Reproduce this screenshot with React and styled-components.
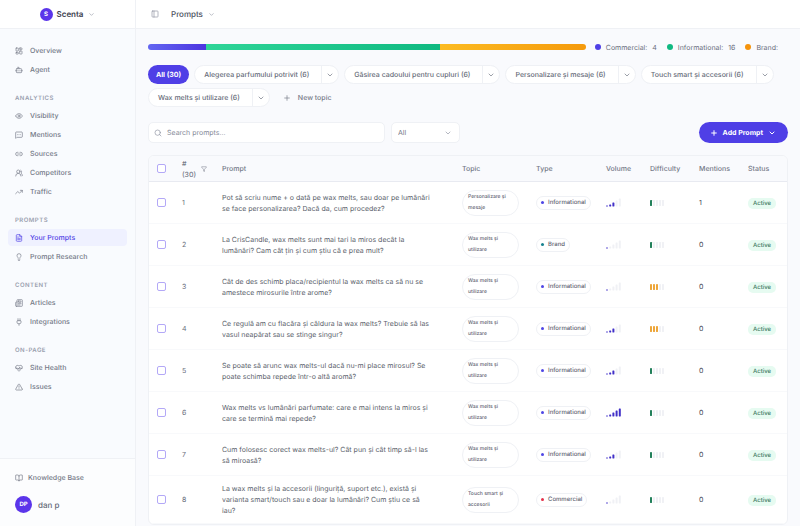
import React from "react";
import styled, { createGlobalStyle, css } from "styled-components";
import {
  LayoutDashboard,
  Bot,
  Eye,
  MessageSquareMore,
  Link2,
  UsersRound,
  TrendingUp,
  FileText,
  Lightbulb,
  Newspaper,
  Plug,
  HeartPulse,
  TriangleAlert,
  BookOpen,
  ChevronDown,
  PanelLeft,
  Plus,
  Search,
  Filter,
} from "lucide-react";

const Global = createGlobalStyle`
  *, *::before, *::after { box-sizing: border-box; }
  body {
    margin: 0;
    background: #f9fafd;
    color: #5b6070;
    font-family: Inter, "Liberation Sans", sans-serif;
    font-size: 7px;
    text-rendering: geometricPrecision;
  }
  button, input, select { font: inherit; color: inherit; text-rendering: inherit; }
  button { cursor: pointer; border: 0; background: none; padding: 0; }
  svg { flex: none; display: block; }
`;

const line = "#eff1f5";
const indigo = "#4f3fe6";

const Shell = styled.div`
  display: flex;
  height: 100vh;
  overflow: hidden;
`;

const Sidebar = styled.aside`
  display: flex;
  flex-direction: column;
  flex: none;
  width: 136px;
  border-right: 1px solid ${line};
  background: #f9fbfe;
`;

const Brand = styled.button`
  display: flex;
  align-items: center;
  justify-content: center;
  gap: 4px;
  height: 29px;
  flex: none;
  background: #fff;
  border-bottom: 1px solid ${line};
  font-size: 8px;
  font-weight: 600;
  color: #3d4150;
  svg { color: #8e93a1; margin-left: 1px; }
`;

const Avatar = styled.span`
  display: grid;
  place-items: center;
  width: ${(p) => p.$size}px;
  height: ${(p) => p.$size}px;
  border-radius: 50%;
  background: #5b35ea;
  color: #fff;
  font-size: 6px;
  font-weight: 700;
`;

const Nav = styled.nav`
  flex: 1;
  min-height: 0;
  padding: 13px 8px 0;
`;

const Section = styled.section`
  display: flex;
  flex-direction: column;
  gap: 2px;
  & + & { margin-top: 15px; }
`;

const SectionTitle = styled.h2`
  margin: 0;
  padding: 0 7px;
  font-size: 6px;
  line-height: 12px;
  font-weight: 600;
  letter-spacing: 0.08em;
  text-transform: uppercase;
  color: #9aa0ae;
`;

const NavItem = styled.a`
  display: flex;
  align-items: center;
  gap: ${(p) => (p.$tight ? 5 : 7)}px;
  height: 17px;
  padding: 0 7px;
  border-radius: 4px;
  font-size: 7px;
  font-weight: 500;
  color: #747987;
  text-decoration: none;
  ${(p) =>
    p.$active &&
    css`
      background: #eff1ff;
      color: ${indigo};
    `}
`;

const SidebarFooter = styled.footer`
  display: flex;
  flex-direction: column;
  gap: 10px;
  padding: 10px 8px 13px;
  border-top: 1px solid ${line};
  background: #fcfdfe;
`;

const User = styled.button`
  display: flex;
  align-items: center;
  gap: 6px;
  padding: 0 7px;
  font-size: 8px;
  font-weight: 500;
  color: #646977;
`;

const Main = styled.main`
  flex: 1;
  min-width: 0;
  display: flex;
  flex-direction: column;
`;

const Topbar = styled.header`
  display: flex;
  align-items: center;
  gap: 12px;
  height: 29px;
  flex: none;
  padding: 0 15px;
  background: #fff;
  border-bottom: 1px solid ${line};
  color: #7d8290;
`;

const TopbarButton = styled.button`
  display: flex;
  align-items: center;
  gap: 5px;
  font-size: 8px;
  font-weight: 500;
  color: #4d5160;
  svg { color: #8e93a1; }
`;

const Content = styled.div`
  flex: 1;
  min-height: 0;
  overflow: auto;
  scrollbar-width: none;
  padding: 13px 12px;
`;

const Distribution = styled.div`
  display: flex;
  align-items: center;
  gap: 9px;
  height: 10px;
`;

const Bar = styled.div`
  display: flex;
  flex: 1;
  height: 6px;
  border-radius: 3px;
  overflow: hidden;
`;

const Segment = styled.div`
  flex: ${(p) => p.$share};
  background: linear-gradient(90deg, ${(p) => p.$from}, ${(p) => p.$to});
`;

const Legend = styled.ul`
  display: flex;
  gap: 10px;
  margin: 0;
  padding: 0 10px 0 0;
  list-style: none;
  font-size: 7px;
  color: #6a6f7d;
`;

const LegendItem = styled.li`
  display: flex;
  align-items: center;
  gap: 5px;
  &::before {
    content: "";
    width: 6px;
    height: 6px;
    border-radius: 50%;
    background: ${(p) => p.$color};
  }
`;

const Chips = styled.div`
  display: flex;
  flex-wrap: wrap;
  gap: 4px 5px;
  margin-top: 13px;
`;

const chipText = css`
  font-size: 7px;
  font-weight: 500;
  line-height: 17px;
`;

const AllChip = styled.button`
  ${chipText}
  height: 19px;
  padding: 0 8px;
  border-radius: 10px;
  background: ${indigo};
  color: #fff;
  font-weight: 700;
`;

const Chip = styled.div`
  display: flex;
  height: 19px;
  border: 1px solid ${line};
  border-radius: 10px;
  background: #fff;
`;

const ChipLabel = styled.button`
  ${chipText}
  padding: 0 12px 0 9px;
  color: #666b78;
`;

const ChipMenu = styled.button`
  display: grid;
  place-items: center;
  width: 17px;
  border-left: 1px solid ${line};
  color: #6a6f7d;
`;

const NewTopic = styled.button`
  ${chipText}
  display: flex;
  align-items: center;
  gap: 7px;
  height: 19px;
  padding: 0 8px;
  color: #747987;
`;

const Toolbar = styled.div`
  display: flex;
  align-items: center;
  gap: 6px;
  margin-top: 15px;
`;

const SearchField = styled.label`
  display: flex;
  align-items: center;
  gap: 5px;
  flex: 0 1 237px;
  height: 21px;
  padding: 0 5px;
  border: 1px solid ${line};
  border-radius: 5px;
  background: #fff;
  color: #8e93a1;
`;

const SearchInput = styled.input`
  flex: 1;
  min-width: 0;
  border: 0;
  padding: 0;
  outline: 0;
  background: none;
  font-size: 7px;
  &::placeholder { color: #858a98; opacity: 1; }
`;

const SelectField = styled.div`
  display: grid;
  align-items: center;
  width: 69px;
  height: 21px;
  border: 1px solid ${line};
  border-radius: 5px;
  background: #fff;
  color: #8e93a1;
  & > * { grid-area: 1 / 1; }
  svg { justify-self: end; margin-right: 7px; pointer-events: none; }
`;

const Select = styled.select`
  appearance: none;
  width: 100%;
  height: 100%;
  padding: 0 6px;
  border: 0;
  background: none;
  color: #747987;
`;

const AddButton = styled.button`
  display: flex;
  align-items: center;
  gap: 5px;
  height: 21px;
  margin-left: auto;
  padding: 0 12px 0 11px;
  border-radius: 11px;
  background: ${indigo};
  color: #fff;
  font-size: 7px;
  font-weight: 700;
`;

const Card = styled.div`
  margin-top: 12px;
  border: 1px solid ${line};
  border-radius: 6px;
  background: #fff;
  overflow: hidden;
`;

const Table = styled.table`
  width: 100%;
  table-layout: fixed;
  border-collapse: separate;
  border-spacing: 0;
`;

const Col = styled.col`
  width: ${(p) => (p.$w ? p.$w + "px" : "auto")};
`;

const Th = styled.th`
  height: 26px;
  padding: 0 0 0 8px;
  background: #f9fafd;
  border-bottom: 1px solid #e8eaf1;
  text-align: left;
  font-size: 7px;
  line-height: 11px;
  font-weight: 500;
  color: #747987;
`;

const NumberHead = styled.div`
  display: flex;
  align-items: center;
  gap: 4px;
  width: 25px;
`;

const Tr = styled.tr`
  height: 42px;
`;

const Td = styled.td`
  padding: 7px 0 7px 8px;
  border-bottom: 1px solid #f8f9fb;
  font-size: 7px;
  line-height: 11px;
  color: ${(p) => (p.$strong ? "#3d4150" : "#6a6f7d")};
`;

const PromptText = styled.div`
  padding-right: 20px;
  color: #5b5f6c;
`;

const Check = styled.input.attrs({ type: "checkbox" })`
  appearance: none;
  display: block;
  width: 9px;
  height: 9px;
  margin: 0;
  border: 1px solid #b3a8f7;
  border-radius: 2px;
  background: #fff;
  &:checked { background: ${indigo}; }
`;

const TopicTag = styled.div`
  width: 57px;
  padding: 1px 5px;
  border: 1px solid ${line};
  border-radius: 13px;
  font-size: 5px;
  line-height: 11px;
  font-weight: 500;
  color: #5f6472;
`;

const TypeTag = styled.span`
  display: inline-flex;
  align-items: center;
  gap: 4px;
  height: 14px;
  padding: 0 4px;
  border: 1px solid ${line};
  border-radius: 7px;
  font-size: 6px;
  font-weight: 500;
  color: #5f6472;
  &::before {
    content: "";
    width: 3px;
    height: 3px;
    border-radius: 50%;
    background: ${(p) => p.$color};
  }
`;

const Status = styled.span`
  display: inline-block;
  padding: 0 5px;
  border-radius: 5px;
  background: #e6fbf1;
  color: #3d7a63;
  font-size: 6px;
  font-weight: 500;
`;

const typeColors = {
  Informational: "#4f46e5",
  Brand: "#17828f",
  Commercial: "#e5304a",
};

const topics = [
  "Alegerea parfumului potrivit (6)",
  "Găsirea cadoului pentru cupluri (6)",
  "Personalizare și mesaje (6)",
  "Touch smart și accesorii (6)",
  "Wax melts și utilizare (6)",
];

const nav = [
  { items: [["Overview", LayoutDashboard], ["Agent", Bot]] },
  {
    title: "Analytics",
    items: [
      ["Visibility", Eye],
      ["Mentions", MessageSquareMore],
      ["Sources", Link2],
      ["Competitors", UsersRound],
      ["Traffic", TrendingUp],
    ],
  },
  { title: "Prompts", items: [["Your Prompts", FileText], ["Prompt Research", Lightbulb]] },
  { title: "Content", items: [["Articles", Newspaper], ["Integrations", Plug]] },
  { title: "On-page", items: [["Site Health", HeartPulse], ["Issues", TriangleAlert]] },
];

const wax = "Wax melts și utilizare";
const rows = [
  ["Pot să scriu nume + o dată pe wax melts, sau doar pe lumânări se face personalizarea? Dacă da, cum procedez?", "Personalizare și mesaje", "Informational", 3, 1, 1],
  ["La CrisCandle, wax melts sunt mai tari la miros decât la lumânări? Cam cât țin și cum știu că e prea mult?", wax, "Brand", 1, 1, 0],
  ["Cât de des schimb placa/recipientul la wax melts ca să nu se amestece mirosurile între arome?", wax, "Informational", 1, 3, 0],
  ["Ce regulă am cu flacăra și căldura la wax melts? Trebuie să las vasul neapărat sau se stinge singur?", wax, "Informational", 3, 3, 0],
  ["Se poate să arunc wax melts-ul dacă nu-mi place mirosul? Se poate schimba repede într-o altă aromă?", wax, "Informational", 3, 1, 0],
  ["Wax melts vs lumânări parfumate: care e mai intens la miros și care se termină mai repede?", wax, "Informational", 5, 1, 0],
  ["Cum folosesc corect wax melts-ul? Cât pun și cât timp să-l las să miroasă?", wax, "Informational", 3, 1, 0],
  ["La wax melts și la accesorii (linguriță, suport etc.), există și varianta smart/touch sau e doar la lumânări? Cum știu ce să iau?", "Touch smart și accesorii", "Commercial", 1, 1, 0],
];

function VolumeBars({ value }) {
  const heights = [1, 2, 4, 6, 8];
  return (
    <svg width="15" height="9" viewBox="0 0 15 9" role="img" aria-label={`Volume ${value} of 5`}>
      {heights.map((h, i) => (
        <rect key={h} x={i * 3.2} y={8.5 - h} width="2" height={h} rx="0.4" fill={i < value ? "#4130c8" : "#f0f1f5"} />
      ))}
    </svg>
  );
}

function DifficultyBars({ value }) {
  const color = value > 2 ? "#eda63a" : "#22805a";
  return (
    <svg width="15" height="6" viewBox="0 0 15 6" role="img" aria-label={`Difficulty ${value} of 5`}>
      {[0, 1, 2, 3, 4].map((i) => (
        <rect key={i} x={i * 3} y="0" width="2" height="6" rx="0.4" fill={i < value ? color : "#f0f1f5"} />
      ))}
    </svg>
  );
}

export default function App() {
  return (
    <>
      <Global />
      <Shell>
        <Sidebar>
          <Brand>
            <Avatar $size={13}>S</Avatar>
            Scenta
            <ChevronDown size={7} />
          </Brand>
          <Nav>
            {nav.map(({ title, items }) => (
              <Section key={title || "main"}>
                {title && <SectionTitle>{title}</SectionTitle>}
                {items.map(([label, Icon]) => (
                  <NavItem key={label} href="#" $active={label === "Your Prompts"}>
                    <Icon size={8} />
                    {label}
                  </NavItem>
                ))}
              </Section>
            ))}
          </Nav>
          <SidebarFooter>
            <NavItem href="#" $tight>
              <BookOpen size={8} />
              Knowledge Base
            </NavItem>
            <User>
              <Avatar $size={17}>DP</Avatar>
              dan p
            </User>
          </SidebarFooter>
        </Sidebar>
        <Main>
          <Topbar>
            <TopbarButton aria-label="Toggle sidebar">
              <PanelLeft size={8} />
            </TopbarButton>
            <TopbarButton>
              Prompts
              <ChevronDown size={7} />
            </TopbarButton>
          </Topbar>
          <Content>
            <Distribution>
              <Bar>
                <Segment $share={4} $from="#6366f1" $to="#4c35e0" />
                <Segment $share={16} $from="#2fd598" $to="#0fb981" />
                <Segment $share={10} $from="#fcbb22" $to="#f59a0c" />
              </Bar>
              <Legend>
                <LegendItem $color="#4f3fe6"><span>Commercial:</span><span>4</span></LegendItem>
                <LegendItem $color="#10b981"><span>Informational:</span><span>16</span></LegendItem>
                <LegendItem $color="#f5930b"><span>Brand:</span></LegendItem>
              </Legend>
            </Distribution>
            <Chips>
              <AllChip>All (30)</AllChip>
              {topics.map((t) => (
                <Chip key={t}>
                  <ChipLabel>{t}</ChipLabel>
                  <ChipMenu aria-label={`Options for ${t}`}>
                    <ChevronDown size={8} />
                  </ChipMenu>
                </Chip>
              ))}
              <NewTopic>
                <Plus size={8} />
                New topic
              </NewTopic>
            </Chips>
            <Toolbar>
              <SearchField>
                <Search size={8} />
                <SearchInput placeholder="Search prompts..." aria-label="Search prompts" />
              </SearchField>
              <SelectField>
                <Select aria-label="Prompt type" defaultValue="All">
                  <option>All</option>
                </Select>
                <ChevronDown size={8} />
              </SelectField>
              <AddButton>
                <Plus size={8} strokeWidth={3} />
                Add Prompt
                <ChevronDown size={8} strokeWidth={3} />
              </AddButton>
            </Toolbar>
            <Card>
              <Table>
                <colgroup>
                  {[25, 40, 0, 74, 70, 44, 49, 49, 47].map((w, i) => (
                    <Col key={i} $w={w} />
                  ))}
                </colgroup>
                <thead>
                  <tr>
                    <Th><Check aria-label="Select all prompts" /></Th>
                    <Th>
                      <NumberHead>
                        <span># (30)</span>
                        <Filter size={6} />
                      </NumberHead>
                    </Th>
                    {["Prompt", "Topic", "Type", "Volume", "Difficulty", "Mentions", "Status"].map((h) => (
                      <Th key={h}>{h}</Th>
                    ))}
                  </tr>
                </thead>
                <tbody>
                  {rows.map(([prompt, topic, type, volume, difficulty, mentions], i) => (
                    <Tr key={prompt}>
                      <Td><Check aria-label={`Select prompt ${i + 1}`} /></Td>
                      <Td>{i + 1}</Td>
                      <Td><PromptText>{prompt}</PromptText></Td>
                      <Td><TopicTag>{topic}</TopicTag></Td>
                      <Td><TypeTag $color={typeColors[type]}>{type}</TypeTag></Td>
                      <Td><VolumeBars value={volume} /></Td>
                      <Td><DifficultyBars value={difficulty} /></Td>
                      <Td $strong>{mentions}</Td>
                      <Td><Status>Active</Status></Td>
                    </Tr>
                  ))}
                </tbody>
              </Table>
            </Card>
          </Content>
        </Main>
      </Shell>
    </>
  );
}
